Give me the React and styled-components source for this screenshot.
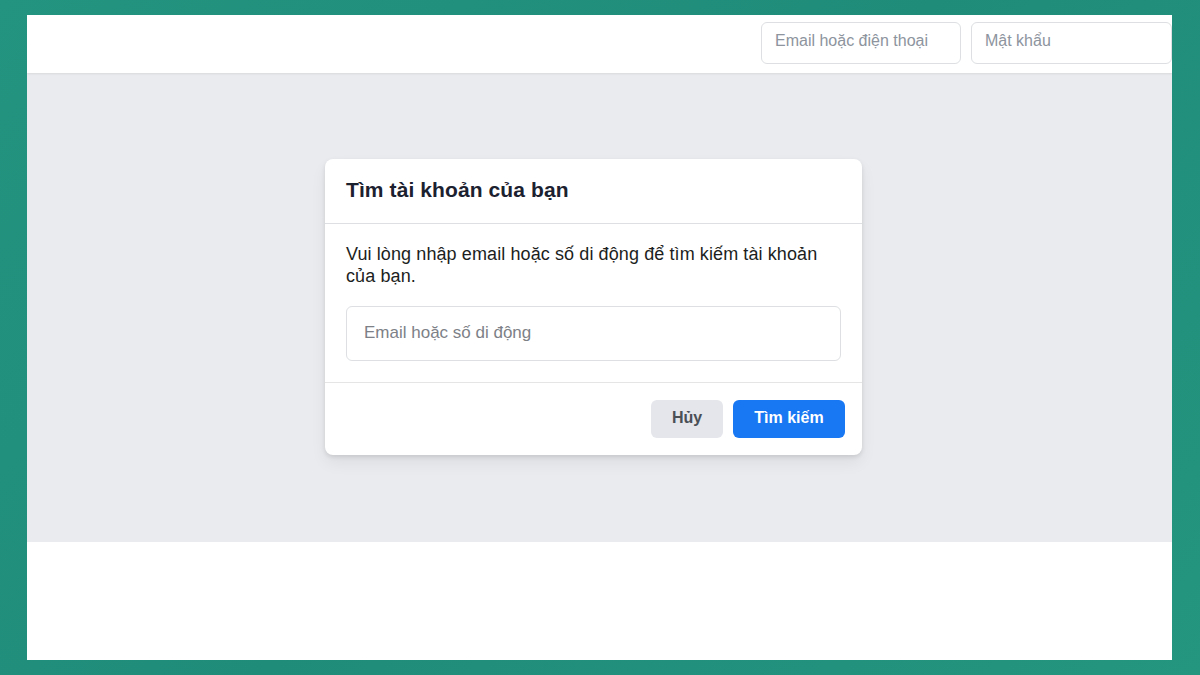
import styled, { createGlobalStyle } from "styled-components";

const GlobalStyle = createGlobalStyle`
  html, body {
    margin: 0;
    padding: 0;
    background: #209080;
    font-family: "Liberation Sans", Arial, sans-serif;
  }
  * { box-sizing: border-box; }
`;

const Frame = styled.div`
  width: 1200px;
  height: 675px;
  background: linear-gradient(135deg, #23947f 0%, #1f8c7a 50%, #24957f 100%);
  padding: 15px 28px 15px 27px;
  overflow: hidden;
`;

const Screen = styled.div`
  width: 1145px;
  height: 645px;
  background: #fff;
  display: flex;
  flex-direction: column;
  overflow: hidden;
`;

const TopBar = styled.header`
  height: 58px;
  flex-shrink: 0;
  display: flex;
  justify-content: flex-end;
  align-items: flex-start;
  gap: 10px;
  padding-top: 7px;
  background: #fff;
  position: relative;
  z-index: 1;
  box-shadow: 0 1px 2px rgba(0, 0, 0, 0.08);
`;

const TopInput = styled.input`
  width: ${(p) => p.$w}px;
  height: 42px;
  border: 1px solid #dddfe2;
  border-radius: 6px;
  padding: 0 13px 4px;
  font-family: inherit;
  font-size: 16px;
  color: #1c1e21;
  outline: none;
  &::placeholder {
    color: #8d949e;
  }
`;

const Stage = styled.main`
  height: 469px;
  flex-shrink: 0;
  background: #e9ebee;
  padding: 86px 0 0 298px;
`;

const Card = styled.section`
  width: 537px;
  background: #fff;
  border-radius: 8px;
  box-shadow: 0 2px 4px rgba(0, 0, 0, 0.1), 0 8px 16px rgba(0, 0, 0, 0.06);
`;

const CardHead = styled.div`
  height: 65px;
  display: flex;
  align-items: center;
  padding: 0 21px 2px;
  border-bottom: 1px solid #dddfe2;
`;

const Title = styled.h2`
  margin: 0;
  font-size: 21px;
  letter-spacing: 0.1px;
  font-weight: 700;
  color: #1c2130;
`;

const CardBody = styled.div`
  padding: 19px 21px 21px;
  border-bottom: 1px solid #e5e5e5;
`;

const Lead = styled.p`
  margin: 0 0 19px;
  font-size: 18px;
  letter-spacing: 0.1px;
  line-height: 22px;
  color: #1c1e21;
`;

const Field = styled.input`
  width: 100%;
  height: 55px;
  border: 1px solid #dddfe2;
  border-radius: 6px;
  padding: 0 17px 2px;
  font-family: inherit;
  font-size: 17px;
  color: #1c1e21;
  outline: none;
  &::placeholder {
    color: #7d8187;
  }
`;

const CardFoot = styled.div`
  display: flex;
  justify-content: flex-end;
  gap: 10px;
  padding: 17px 17px 17px;
`;

const Button = styled.button`
  width: ${(p) => p.$w}px;
  height: 38px;
  border: none;
  border-radius: 6px;
  font-family: inherit;
  font-size: 16px;
  font-weight: 700;
  padding: 0 0 3px;
  cursor: pointer;
  background: ${(p) => (p.$primary ? "#1877f2" : "#e4e6eb")};
  color: ${(p) => (p.$primary ? "#fff" : "#4b4f56")};
`;

const Footer = styled.div`
  flex: 1;
  background: #fff;
`;

export default function App() {
  return (
    <>
      <GlobalStyle />
      <Frame>
        <Screen>
          <TopBar>
            <TopInput $w={200} placeholder="Email hoặc điện thoại" />
            <TopInput $w={201} placeholder="Mật khẩu" type="password" />
          </TopBar>
          <Stage>
            <Card>
              <CardHead>
                <Title>Tìm tài khoản của bạn</Title>
              </CardHead>
              <CardBody>
                <Lead>
                  Vui lòng nhập email hoặc số di động để tìm kiếm tài khoản của
                  bạn.
                </Lead>
                <Field placeholder="Email hoặc số di động" />
              </CardBody>
              <CardFoot>
                <Button $w={72}>Hủy</Button>
                <Button $w={112} $primary>
                  Tìm kiếm
                </Button>
              </CardFoot>
            </Card>
          </Stage>
          <Footer />
        </Screen>
      </Frame>
    </>
  );
}
